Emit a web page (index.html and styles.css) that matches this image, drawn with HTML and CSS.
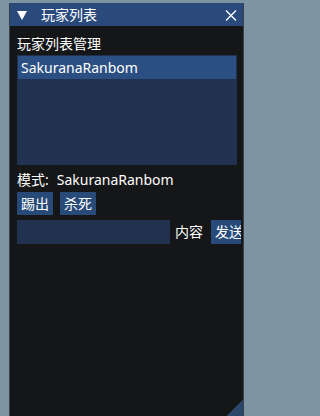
FILE: index.html
```html
<!DOCTYPE html>
<html lang="zh">
<head>
<meta charset="utf-8">
<title>玩家列表</title>
<link rel="stylesheet" href="styles.css">
</head>
<body>
<div class="window">
  <div class="titlebar">
    <svg class="collapse" width="10" height="9" viewBox="0 0 10 9"><polygon points="0,0 10,0 5,9" fill="#ffffff"/></svg>
    <span class="title">玩家列表</span>
    <svg class="close" width="12" height="11" viewBox="0 0 12 11"><path d="M1 0.5 L11 10.5 M11 0.5 L1 10.5" stroke="#ffffff" stroke-width="1.3" fill="none"/></svg>
  </div>
  <div class="content">
    <div class="label">玩家列表管理</div>
    <div class="listbox">
      <div class="item selected">SakuranaRanbom</div>
    </div>
    <div class="mode"><span>模式:</span><span class="mode-value">SakuranaRanbom</span></div>
    <div class="buttons">
      <button class="btn">踢出</button>
      <button class="btn">杀死</button>
    </div>
    <div class="sendrow">
      <div class="input"></div>
      <span class="inlabel">内容</span>
      <button class="btn">发送</button>
    </div>
  </div>
  <div class="grip"></div>
</div>
</body>
</html>
```
FILE: styles.css
```css
html, body {
  margin: 0;
  padding: 0;
}
body {
  background: #7d95a3;
  width: 251px;
  height: 416px;
  overflow: hidden;
  font-family: "Noto Sans", "Noto Sans CJK SC", sans-serif;
  font-size: 14px;
  color: #ffffff;
}
.window {
  position: relative;
  box-sizing: border-box;
  margin-left: 9px;
  margin-top: 3px;
  width: 235px;
  height: 413px;
  background: #151617;
  border-left: 1px solid #3b3f48;
  border-right: 1px solid #3b3f48;
  overflow: hidden;
}
.titlebar {
  height: 23px;
  background: #2a4a7c;
  display: flex;
  align-items: center;
  padding-left: 8px;
  margin-left: -1px;
  margin-right: -1px;
}
.collapse {
  flex: none;
  margin-top: 1px;
}
.title {
  margin-left: 14px;
  line-height: 23px;
  flex: 1;
}
.close {
  flex: none;
  margin-right: 7px;
  margin-top: 1px;
}
.content {
  padding: 8px 0 0 7px;
}
.label {
  line-height: 20px;
  height: 20px;
}
.listbox {
  margin-top: 1px;
  width: 220px;
  height: 110px;
  box-sizing: border-box;
  padding: 1px;
  background: #20324f;
}
.item {
  height: 23px;
  line-height: 23px;
  padding-left: 3px;
}
.selected {
  background: #2b4f82;
}
.mode {
  margin-top: 5px;
  height: 20px;
  line-height: 20px;
  display: flex;
}
.mode-value {
  margin-left: 8px;
}
.buttons {
  margin-top: 2px;
  display: flex;
  gap: 7px;
}
.btn {
  font: inherit;
  color: #ffffff;
  background: #284a78;
  border: none;
  margin: 0;
  padding: 0 4px;
  height: 23px;
  line-height: 23px;
  flex: none;
}
.sendrow {
  margin-top: 5px;
  width: 224px;
  height: 24px;
  display: flex;
  align-items: center;
  overflow: hidden;
}
.sendrow .btn {
  height: 24px;
  line-height: 24px;
  margin-left: 8px;
}
.input {
  flex: none;
  width: 153px;
  height: 24px;
  background: #20324f;
}
.inlabel {
  flex: none;
  margin-left: 5px;
  line-height: 24px;
}
.grip {
  position: absolute;
  right: 0;
  bottom: 0;
  width: 16px;
  height: 16px;
  background: linear-gradient(135deg, transparent 50%, #2a4668 50%);
}
```
